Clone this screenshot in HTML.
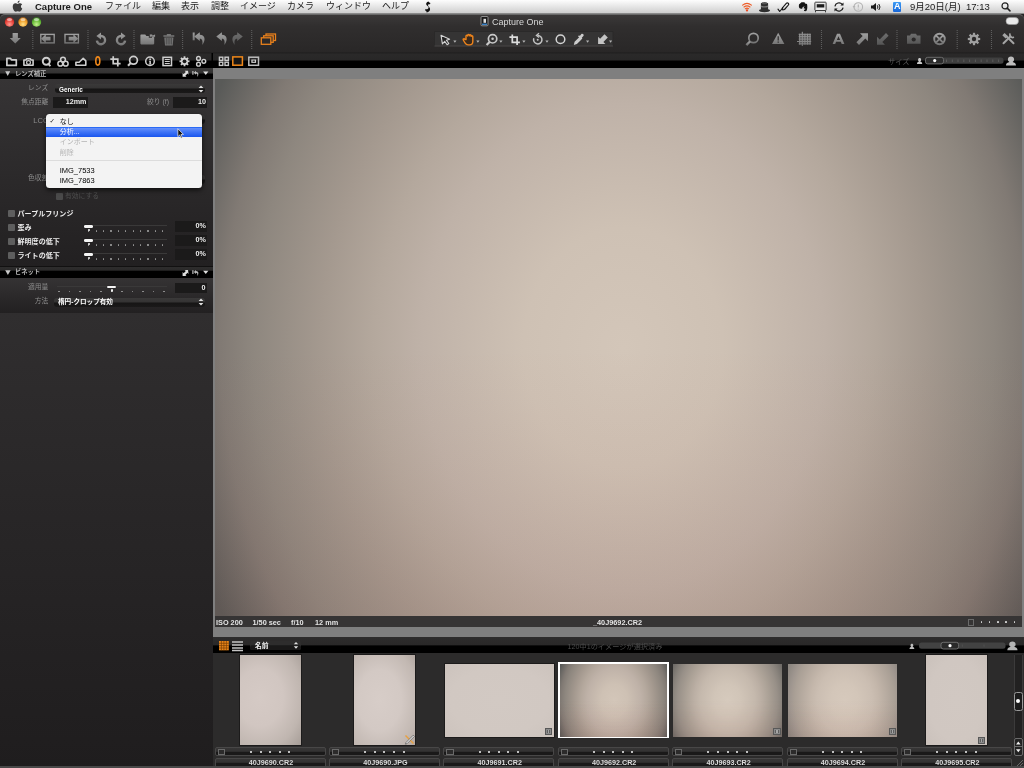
<!DOCTYPE html>
<html lang="ja">
<head>
<meta charset="utf-8">
<title>Capture One</title>
<style>
*{box-sizing:border-box;margin:0;padding:0}
html,body{width:1024px;height:768px;overflow:hidden;background:#252424}
body{position:relative;will-change:transform;font-family:"Liberation Sans","Noto Sans CJK JP",sans-serif;font-size:8px;color:#ddd;line-height:1}
.abs{position:absolute}
.t{position:absolute;white-space:nowrap;line-height:1}
/* menubar */
#menubar{position:absolute;left:0;top:0;width:1024px;height:14px;background:linear-gradient(#fdfdfd,#e6e6e6 50%,#cfcfcf);border-bottom:1px solid #8a8a8a}
#menubar .t{color:#1a1a1a;font-size:9px;top:1.6px}
/* window chrome */
#chrome{position:absolute;left:0;top:14px;width:1024px;height:39px;background:linear-gradient(#3b3939,#302e2e 30%,#2b2929 80%,#292727 97%,#1e1d1d);border-top:1px solid #6a6a6a;border-radius:5px 5px 0 0}
#tabs{position:absolute;left:0;top:53px;width:1024px;height:15px;background:linear-gradient(#232222 0,#2a2929 1.5px,#282727 6.800px,#000 8.300px,#000 15px)}
/* left panel */
#left{position:absolute;left:0;top:68px;width:213px;height:700px;background:#242323}
.phead{position:absolute;left:0;width:213px;height:11px;background:linear-gradient(#3a3939 0,#333232 5px,#000 6px,#000 11px)}
.lab{position:absolute;white-space:nowrap;color:#8c8c8c;font-size:6.8px;text-align:right;line-height:1}
.blab{position:absolute;white-space:nowrap;color:#ececec;font-size:7.05px;font-weight:bold;line-height:1}
.field{position:absolute;background:#1b1a1a;height:11px;color:#ececec;font-size:7.2px;font-weight:bold;text-align:right;padding:1.1px 1px 0 0;line-height:1}
.dd{position:absolute;height:9px;border-radius:3px;background:linear-gradient(#3a3939 0,#343333 4px,#161515 5px,#1a1919 9px);color:#fff;font-weight:bold;font-size:7.5px;padding:1px 0 0 4px;line-height:1;white-space:nowrap}
.cb{position:absolute;width:7px;height:7px;background:#5e5e5e;border-radius:1px}
/* viewer */
#viewer{position:absolute;left:213px;top:68px;width:811px;height:569px;background:#7f7f7f}
#photo{position:absolute;left:2px;top:11px;width:807px;height:537px;background:linear-gradient(to bottom,rgba(160,80,64,0) 50%,rgba(160,80,64,.1) 100%),radial-gradient(ellipse 458px 550px at 50.6% 50%,#d3c6b9 0,#cec1b4 21.800%,#bfb2a8 44.100%,#b4a89d 54.600%,#a4998f 66.200%,#8e877f 80.800%,#817a74 88%,#595a58 100%)}
#info{position:absolute;left:2px;top:548px;width:807px;height:11px;background:#363434}
/* browser */
#btool{position:absolute;left:213px;top:637px;width:811px;height:16px;background:linear-gradient(#2d2c2c 0,#292828 8px,#000 8.8px,#000 16px)}
#strip{position:absolute;left:213px;top:653px;width:811px;height:115px;background:#2c2b2b}
.cell{position:absolute;top:747.2px;width:111px;height:22px}
.rate{position:absolute;left:0;top:0;width:111px;height:9.3px;border:1px solid #484747;border-radius:2px;background:linear-gradient(#373636 0,#333232 3.4px,#1a1919 3.9px,#1a1919 100%)}
.name{position:absolute;left:0;top:10.4px;width:111px;height:11px;border:1px solid #484747;border-radius:2px;background:linear-gradient(#373636 0,#333232 3.4px,#1a1919 3.9px,#1a1919 100%);color:#dadada;font-size:7.2px;font-weight:bold;text-align:center;line-height:8.2px;padding-left:2px}

.hd{color:#b6b6b6;font-size:6.3px;font-weight:bold}
.trk{position:absolute;height:1px;background:#3a3939}
.sl i{position:absolute;width:1.3px;height:1.3px;background:#9a9a9a;border-radius:50%}
.sl b{position:absolute;height:2.6px;background:#f4f4f4;border-radius:1.3px;box-shadow:0 0 1px #000}
.sl u{position:absolute;width:2px;height:2.600px;background:#f0f0f0;border-radius:1px}
#popup{position:absolute;left:46px;top:113.500px;width:156px;height:74.500px;background:#f3f3f3;border-radius:3.500px;box-shadow:0 2px 5px rgba(0,0,0,.7);overflow:hidden;color:#1a1a1a;font-size:7px}
#popup .t{font-size:7px}

.it{top:2.900px;font-size:7.300px;font-weight:bold;color:#e4e4e4}
#info i{position:absolute;top:5.200px;width:1.700px;height:1.700px;border-radius:50%;background:#d8d8d8}
.rate i{position:absolute;top:2.7px;width:2px;height:2px;border-radius:50%;background:#f4f4f4}
.rate b{position:absolute;left:2px;top:.5px;width:7.3px;height:6.8px;border:1px solid #6a6a6a;background:#2c2b2b}
.bdg{position:absolute;width:7.800px;height:7.200px;background:#8a8a8a;border:1px solid #585858}
.bdg i{position:absolute;left:1.100px;top:.9px;width:3.600px;height:3.400px;border-left:1px solid #5e5e5e;border-right:1px solid #5e5e5e;background:#a6a6a6}
</style>
</head>
<body>
<div id="menubar">
<svg class="abs" style="left:10.500px;top:.3px" width="13" height="13" viewBox="0 0 12 12"><path d="M8.3 3.1c-.9 0-1.5.5-2.1.5-.6 0-1.300-.5-2.100-.5C2.800 3.100 1.600 4.200 1.600 6.200c0 2.100 1.500 4.600 2.700 4.600.6 0 1-.4 1.800-.4s1.100.4 1.800.4c1.100 0 2.200-1.900 2.500-2.900-1.600-.7-1.700-3.100-.1-3.800-.5-.7-1.200-1-2-1zM7.900.4C7 .5 6 1.400 6 2.600c1 .1 2-.9 1.900-2.200z" fill="#3c3c3c"/></svg>
<span class="t" style="left:35px;font-weight:bold;font-size:9.5px">Capture One</span>
<span class="t" style="left:105px">ファイル</span>
<span class="t" style="left:152px">編集</span>
<span class="t" style="left:181px">表示</span>
<span class="t" style="left:211px">調整</span>
<span class="t" style="left:240px">イメージ</span>
<span class="t" style="left:287px">カメラ</span>
<span class="t" style="left:326px">ウィンドウ</span>
<span class="t" style="left:382px">ヘルプ</span>
<svg class="abs" style="left:423px;top:1px" width="9" height="12" viewBox="0 0 9 12"><path d="M5.500.5C3.500 1 2.500 2.500 3.500 4 4.500 5.300 6 5.500 5.500 7 5 8.200 3.500 8.500 2.500 8l-.5 1.200C3 10 4 10.500 3.500 11.500 6 11 7.500 9.500 7 7.500 6.600 6 5 5.500 5 4.300 5 3.300 6 3 7 3.300L7.400 2C6.500 1.700 6 1.300 5.500.5z" fill="#111"/></svg>
<!-- status icons -->
<svg class="abs" style="left:741px;top:1px" width="12" height="12" viewBox="0 0 12 12"><g fill="none" stroke="#ef5d28" stroke-width="1.150" stroke-linecap="round"><path d="M1.600 4.100Q6 .6 10.400 4.100"/><path d="M3 6Q6 3.600 9 6"/><path d="M4.400 7.700Q6 6.500 7.600 7.700"/></g><circle cx="6" cy="9.400" r="1.150" fill="#ea4a22"/></svg>
<svg class="abs" style="left:758px;top:1px" width="13" height="12" viewBox="0 0 13 12"><path d="M2.900 2.200Q6.500 .2 10.100 2.200V8.200Q12.300 8.600 12 9.600 11.300 11.200 6.500 11.200 1.700 11.200 1 9.600.7 8.600 2.900 8.200z" fill="#2e2e2e"/><path d="M2.900 4.600Q6.500 5.800 10.100 4.600V6Q6.500 7.200 2.900 6z" fill="#777"/><ellipse cx="6.500" cy="2.300" rx="3" ry=".9" fill="#555"/></svg>
<svg class="abs" style="left:777px;top:1px" width="13" height="12" viewBox="0 0 13 12"><g fill="none" stroke="#161616" stroke-width="1.150" stroke-linecap="round" stroke-linejoin="round"><path d="M1 8.200l1.700 2.300L5.800 6.800"/><path d="M5.300 7L9.300 2.300c1.200-1.200 3.200.4 2.100 1.700L7.500 8.500 5.800 9z"/></g></svg>
<svg class="abs" style="left:797px;top:1px" width="12" height="12" viewBox="0 0 12 12"><path d="M2 3.500L4.500 1.200h3L8 2.500l2 .5c.5 2 .5 4.500-.3 6.500-.5 1-2.200 1-2.700.3V8.500c.5.300 1.300.3 1.300-.4 0-.6-.8-.7-1.500-.6-.3-1 .2-1.700 1.200-1.900-1.500-.3-2.600.5-2.800 2.200-1 .1-2.600-.2-3-1C1.800 5.800 1.700 4.500 2 3.500z" fill="#141414"/></svg>
<svg class="abs" style="left:814px;top:1px" width="13" height="12" viewBox="0 0 13 12"><rect x=".9" y="1.200" width="11.200" height="8.300" rx=".6" fill="#ececec" stroke="#3a3a3a" stroke-width="1"/><rect x="2.700" y="3.200" width="7.600" height="3.300" fill="#1c1c1c"/><path d="M1.500 9.500v1.800M11.500 9.500v1.800" stroke="#3a3a3a" stroke-width="1"/></svg>
<svg class="abs" style="left:833px;top:1px" width="12" height="12" viewBox="0 0 12 12"><g fill="none" stroke="#1b1b1b" stroke-width="1.250"><path d="M1.900 5.300A4.200 4.200 0 0 1 9.200 3.300"/><path d="M10.100 6.700A4.200 4.200 0 0 1 2.800 8.700"/></g><path d="M10.500 1.500v3.100H7.400z" fill="#1b1b1b"/><path d="M1.500 10.500V7.400h3.100z" fill="#1b1b1b"/></svg>
<svg class="abs" style="left:852px;top:1px" width="12" height="12" viewBox="0 0 12 12"><circle cx="6.300" cy="6" r="4.300" fill="none" stroke="#b4b4b4" stroke-width="1.100"/><path d="M6.300 3.500v3M6.300 7.800v.8" stroke="#b4b4b4" stroke-width="1.100"/><path d="M.5 5l1.500 2 1.500-2z" fill="#b4b4b4"/></svg>
<svg class="abs" style="left:870px;top:1px" width="12" height="12" viewBox="0 0 12 12"><path d="M1 4.500h2L6 2v8L3 7.500H1z" fill="#1b1b1b"/><path d="M7.300 4.300q1.300 1.700 0 3.400M8.800 3q2.400 3 0 6" fill="none" stroke="#1b1b1b" stroke-width="1"/></svg>
<div class="abs" style="left:893px;top:2px;width:8px;height:10px;background:linear-gradient(#3d9cf5,#1766d8);border-radius:1px"></div>
<span class="t" style="left:894px;top:2.300px;font-weight:bold;font-size:9px;color:#fff">A</span>
<span class="t" style="left:910px;font-size:9.500px">9月20日(月)</span>
<span class="t" style="left:966px;font-size:9.500px">17:13</span>
<svg class="abs" style="left:1000px;top:1px" width="12" height="12" viewBox="0 0 12 12"><circle cx="5" cy="4.900" r="3" fill="none" stroke="#222" stroke-width="1.200"/><path d="M7.200 7.100L10 9.900" stroke="#222" stroke-width="1.500" stroke-linecap="round"/></svg>
</div>
<div id="chrome"></div>
<div id="tabs"></div>
<svg class="abs" style="left:0;top:14px" width="1024" height="54" viewBox="0 14 1024 54">
<defs>
<radialGradient id="gr" cx=".5" cy=".75" r=".7"><stop offset="0" stop-color="#ff9d94"/><stop offset=".6" stop-color="#e8453c"/><stop offset="1" stop-color="#a8231c"/></radialGradient>
<radialGradient id="gy" cx=".5" cy=".75" r=".7"><stop offset="0" stop-color="#ffe28a"/><stop offset=".6" stop-color="#f0a02c"/><stop offset="1" stop-color="#b56a12"/></radialGradient>
<radialGradient id="gg" cx=".5" cy=".75" r=".7"><stop offset="0" stop-color="#c5f08e"/><stop offset=".6" stop-color="#6cbf3c"/><stop offset="1" stop-color="#3b8220"/></radialGradient>
<linearGradient id="ig" x1="0" y1="0" x2="0" y2="1"><stop offset="0" stop-color="#a0a0a0"/><stop offset="1" stop-color="#767676"/></linearGradient>
<linearGradient id="idim" x1="0" y1="0" x2="0" y2="1"><stop offset="0" stop-color="#6e6e6e"/><stop offset="1" stop-color="#565656"/></linearGradient>
</defs>
<circle cx="9.500" cy="22" r="4.700" fill="url(#gr)"/><ellipse cx="9.500" cy="19.600" rx="2.600" ry="1.500" fill="#fff" opacity=".55"/>
<circle cx="23" cy="22" r="4.700" fill="url(#gy)"/><ellipse cx="23" cy="19.600" rx="2.600" ry="1.500" fill="#fff" opacity=".55"/>
<circle cx="36.500" cy="22" r="4.700" fill="url(#gg)"/><ellipse cx="36.500" cy="19.600" rx="2.600" ry="1.500" fill="#fff" opacity=".55"/>
<rect x="1006" y="17.500" width="12.500" height="7" rx="3.500" fill="#e9e9e9" stroke="#9a9a9a" stroke-width=".6"/>
<!-- separators -->
<g stroke="#5e5e5e" stroke-width="1.100" stroke-dasharray="1 1" fill="none">
<path d="M32.800 30v19M88 30v19M134 30v19M182.600 30v19M251.700 30v19M821.500 30v19M897 30v19M957.200 30v19M991.500 30v19"/>
</g>
<!-- left toolbar icons -->
<g fill="url(#ig)">
<path d="M12.600 33h5.300v5h2.900L15.250 43.600 9.700 38h2.900z"/>
<path d="M101 32.600v2.200a5.300 5.300 0 1 1-5.300 6l2.400-.4a2.900 2.900 0 1 0 2.900-3.200v2.400l-4.600-3.600z"/>
<path d="M121 32.600v2.200a5.300 5.300 0 1 0 5.300 6l-2.400-.4a2.900 2.900 0 1 1-2.900-3.200v2.400l4.600-3.600z"/>
<path d="M140.400 35.300c0-.5.300-.7.700-.7h4.200l1 1.400h2.500v1.800h3.200v-1h2.200V43.600c0 .5-.3.800-.8.800h-12.200c-.5 0-.8-.3-.8-.8z"/><path d="M149.800 34.600h2.300l.5.900 2.500-.9v2.200l-2.200.6-.6-.9-2.500.6z"/>
<g fill="#777"><path d="M163.400 35.300h10.900v1.500h-10.900zM166.800 34h4.100v1.400h-4.100zM164.300 37.400h9.100l-.7 8.100h-7.700z"/></g><path d="M166.300 38v6.500M168.100 38v6.500M169.900 38v6.500M171.600 38v6.500" stroke="#3d3c3c" stroke-width=".7"/>
<path d="M192.700 32.500h2v7.800h-2z"/><path d="M194.2 36.600L199.8 32.200V34.700C204.4 34.700 206.6 39.300 202.2 45.100C202.9 41.500 202.4 38.800 199.8 38.800V41.100Z"/>
<path d="M216.3 36.600L221.9 32.200V34.700C226.5 34.700 228.7 39.300 224.3 45.100C225.0 41.500 224.5 38.800 221.9 38.800V41.100Z"/>
</g>
<g fill="none" stroke="url(#ig)" stroke-width="1.400">
<rect x="40.800" y="34.400" width="13.400" height="8.500"/>
<rect x="65" y="34.400" width="13.400" height="8.500"/>
</g>
<g fill="url(#ig)"><path d="M41 38.650l4.800-4.300v2.500h4.700v3.600h-4.700v2.500z"/><path d="M78.200 38.650l-4.800-4.300v2.500h-4.700v3.600h4.700v2.500z"/></g>
<path d="M242.8 36.600L237.2 32.200V34.700C232.6 34.700 230.4 39.300 234.8 45.100C234.1 41.500 234.6 38.800 237.2 38.800V41.100Z" fill="url(#idim)"/>
<g fill="#2b2929" stroke="#e8801c" stroke-width="1.300"><rect x="266" y="34" width="9.500" height="6.500"/><rect x="263.700" y="35.800" width="9.500" height="6.500"/><rect x="261.300" y="37.800" width="9.500" height="6.500"/></g>
<!-- window title -->
<rect x="481" y="16.500" width="7" height="9.300" rx="1" fill="#1a1a1a" stroke="#9a9a9a" stroke-width=".9"/><rect x="483.500" y="18.800" width="2.500" height="4" fill="#ddd"/><rect x="482" y="23.600" width="5" height="1.300" fill="#3d8edc"/>
<text x="492" y="25" font-family="Liberation Sans, sans-serif" font-size="9" fill="#d6d6d6">Capture One</text>
<!-- center cluster -->
<rect x="434.500" y="31.500" width="178.500" height="14.300" fill="#353434"/><path d="M434.500 45.800v-14.300h178.500v14.300" fill="none" stroke="#2a2929" stroke-width="1"/><path d="M434.500 46h178.500" stroke="#4a4949" stroke-width="1"/>
<g fill="#b4b4b4"><path d="M453.300 40.600h3.200l-1.600 2.200zM476.300 40.600h3.200l-1.600 2.200zM499.300 40.600h3.200l-1.600 2.200zM522.300 40.600h3.200l-1.600 2.200zM545.400 40.600h3.200l-1.600 2.200zM586 40.600h3.200l-1.600 2.200zM609 40.600h3.200l-1.600 2.200z"/></g>
<path d="M441 35.200l8.600 4-3.300 1 2.500 3.300-1.700 1.200-2.400-3.400-2.300 2.500z" fill="#232222" stroke="#d4d4d4" stroke-width="1.100" stroke-linejoin="round"/>
<path d="M466 39.500v-3.400c0-1.200 1.700-1.200 1.700 0v-.8c0-1.200 1.700-1.200 1.700 0v.4c0-1.200 1.700-1.200 1.700 0v.7c0-1.100 1.700-1.100 1.700.1v5c0 2.200-1.100 3.400-3.100 3.400h-1.700c-1.500 0-2.200-.8-3-2.100l-1.700-2.800c-.6-1 .8-1.700 1.500-.8z" fill="#3a2a1c" stroke="#ee841c" stroke-width="1.400" stroke-linejoin="round"/>
<g fill="none" stroke="#c9c9c9"><circle cx="492.600" cy="38.800" r="4.200" stroke-width="1.700"/><path d="M489.600 42l-3 3" stroke-width="2.200"/><circle cx="492.600" cy="38.800" r="1.300" fill="#c9c9c9" stroke="none"/></g>
<path d="M512.300 34.400v7.900h7.600M509.400 37.200h7.700v7.800" fill="none" stroke="#dcdcdc" stroke-width="1.700"/>
<g fill="none" stroke="#c4c4c4" stroke-width="1.500"><path d="M533.800 38.300a4.200 4.200 0 1 0 3.800-2.800"/><path d="M539 33.200l-2.600 2.300 2.700 2" stroke-width="1.300"/><circle cx="537.700" cy="39.800" r="1" fill="#c4c4c4" stroke="none"/></g>
<circle cx="560.500" cy="39.300" r="4.300" fill="none" stroke="#d4d4d4" stroke-width="1.500"/>
<path d="M573.800 45l.8-3.200 4.600-4.600 2.300 2.300-4.600 4.600zM579.800 35.900l1.600-1.800c1.100-1.100 3.100.7 2 1.900l-1.600 1.800.6.700-1.100 1.100-3.300-3.300 1.100-1.100z" fill="#cccccc"/>
<path d="M604.500 34.300l-4.400 4.400-2-2v7.300h7.300l-2-2 4.400-4.400z" fill="#c4c4c4"/>
<!-- right toolbar -->
<g fill="none" stroke="url(#ig)"><circle cx="753.500" cy="38" r="4.700" stroke-width="1.700"/><path d="M750 41.500l-3.600 3.600" stroke-width="2.300"/></g>
<path d="M778.200 32.800l6.200 11.200H772z" fill="url(#ig)"/><path d="M778.200 36.200v4.300M778.200 41.600v1.200" stroke="#2b2929" stroke-width="1.200"/>
<g stroke="url(#ig)" stroke-width="1" fill="none"><path d="M802.300 31.800v14.200M799.700 33.800v10.800M804.900 33.800v10.800M807.500 33.800v10.800M810.100 33.800v10.800M797 41.500h14.200M798.700 34.300h12M798.700 36.700h12M798.700 39.100h12M798.700 43.900h12"/></g>
<rect x="799.200" y="33.800" width="11.400" height="10.600" fill="#8a8a8a" opacity=".4"/>
<path d="M837 33.700h3l4.400 10.400h-2.700l-.9-2.300h-4.700l-.9 2.300h-2.600zM838.500 36.300l-1.600 3.700h3.200z" fill="url(#ig)"/>
<path d="M860 33.300h8v8l-2.700-2.700-6.300 6.300-2.600-2.600 6.300-6.300z" fill="url(#ig)"/>
<path d="M885 44.700h-8v-8l2.700 2.700 6.300-6.300 2.600 2.600-6.300 6.300z" fill="url(#idim)"/>
<path d="M907 35.500h3l1-1.800h5l1 1.800h3.500v8.300H907z" fill="url(#idim)"/><circle cx="913.700" cy="39.500" r="2.100" fill="#2b2929"/>
<g fill="none" stroke="url(#ig)" stroke-width="1.900"><circle cx="939.500" cy="39" r="5.300"/><path d="M935.900 35.400l7.200 7.200M943.100 35.400l-7.200 7.200"/></g>
<g transform="translate(974,39)"><g fill="#a0a0a0"><circle r="4.500"/><g id="teeth"><rect x="-1.100" y="-6.200" width="2.200" height="12.400"/><rect x="-1.100" y="-6.200" width="2.200" height="12.400" transform="rotate(45)"/><rect x="-1.100" y="-6.200" width="2.200" height="12.400" transform="rotate(90)"/><rect x="-1.100" y="-6.200" width="2.200" height="12.400" transform="rotate(135)"/></g></g><circle r="2.200" fill="#2b2929"/></g>
<g stroke="#a4a4a4" fill="none" stroke-linecap="round"><path d="M1003.500 43.300l7-7" stroke-width="2"/><path d="M1013.500 43.300l-7.300-7.300" stroke-width="2"/></g><path d="M1002.300 35.300l2.300-2.300 3.300 3.300-2.300 2.300z" fill="#a4a4a4"/><path d="M1010.200 33.400a2.700 2.700 0 0 0 3.700 3.700" fill="none" stroke="#a4a4a4" stroke-width="1.700"/>
<!-- tool tabs -->
<rect x="211.500" y="53" width="1.500" height="15" fill="#000"/>
<g fill="none" stroke="#cecece" stroke-width="1.700" stroke-linejoin="round">
<path d="M6.900 58.300h3.500l1 1.500h4.900v5.600H6.900z"/>
<path d="M23.900 60h2.100l.8-1.300h3.400l.8 1.300h2.100v5.200h-9.200z" stroke-width="1.600"/><circle cx="28.500" cy="62.500" r="1.900" stroke-width="1.200"/>
<circle cx="46.300" cy="61.200" r="3.500" stroke-width="2"/><path d="M47.800 63.300l2.600 2.800" stroke-width="1.900"/>
<circle cx="63" cy="59.600" r="2.400" stroke-width="1.500"/><circle cx="60.300" cy="63.700" r="2.400" stroke-width="1.500"/><circle cx="65.700" cy="63.700" r="2.400" stroke-width="1.500"/>
<path d="M75.900 65.200v-2.900h3.300l4-4 2.600 2.600v4.300z" stroke-width="1.600"/>
<path d="M113.200 56.300v7.400h7.400M110.300 59.100h7.500v7.400" stroke-width="1.700" stroke-linejoin="miter"/>
<circle cx="133.500" cy="60.300" r="3.900" stroke-width="1.700"/><path d="M130.700 63.100l-2.700 2.700" stroke-width="2.100"/>
<circle cx="150" cy="61.300" r="4.300" stroke-width="1.500"/>
<rect x="163" y="57.300" width="8.500" height="8.300" stroke-width="1.500" stroke-linejoin="miter"/><path d="M164.800 59.500h5M164.800 61.500h5M164.800 63.500h5" stroke-width="1.100"/>
<circle cx="198.500" cy="58.400" r="1.900" stroke-width="1.400"/><circle cx="198.500" cy="64.200" r="1.900" stroke-width="1.400"/><circle cx="203.800" cy="61.300" r="1.900" stroke-width="1.400"/>
<g stroke-width="1.400" stroke-linejoin="miter" stroke="#c8c8c8"><rect x="219.400" y="57.200" width="3.400" height="3.200"/><rect x="225" y="57.200" width="3.400" height="3.200"/><rect x="219.400" y="62.200" width="3.400" height="3.200"/><rect x="225" y="62.200" width="3.400" height="3.200"/></g>
<rect x="248.800" y="57.200" width="9.700" height="8.100" stroke="#bdbdbd" stroke-width="1.500" stroke-linejoin="miter"/>
</g>
<path d="M149.300 58.600h1.600v1.400h-1.600zM148.900 60.700h2v3h.6v.8h-2.900v-.8h.8v-2.200h-.5z" fill="#d2d2d2"/>
<rect x="251.300" y="59.500" width="4.800" height="3.400" fill="#cfcfcf"/><rect x="252.600" y="60.500" width="2.200" height="1.400" fill="#222"/>
<ellipse cx="97.800" cy="61" rx="2" ry="4.100" fill="none" stroke="#f0881a" stroke-width="1.600"/>
<rect x="232.800" y="56.900" width="9.600" height="8.300" fill="#161616" stroke="#f0881a" stroke-width="1.500"/>
<g transform="translate(184.500,61.300)"><g fill="#d2d2d2"><circle r="3.600"/><rect x="-.9" y="-5" width="1.800" height="10"/><rect x="-.9" y="-5" width="1.800" height="10" transform="rotate(45)"/><rect x="-.9" y="-5" width="1.800" height="10" transform="rotate(90)"/><rect x="-.9" y="-5" width="1.800" height="10" transform="rotate(135)"/></g><circle r="1.900" fill="#1a1a1a"/></g>
<!-- size slider -->
<text x="888" y="63.600" font-family="Liberation Sans, Noto Sans CJK JP, sans-serif" font-size="7.300" fill="#5a5a5a">サイズ</text>
<path d="M917 64c0-1.800 1-2 2-2.400-.8-.6-.9-1.100-.9-1.800 0-1 .6-1.700 1.500-1.700s1.500.7 1.500 1.700c0 .7-.1 1.200-.9 1.800 1 .4 2 .6 2 2.400z" fill="#c8c8c8"/>
<path d="M1006 65.600c0-2.700 1.700-3 3.400-3.600-1.300-.8-1.500-1.600-1.500-2.700 0-1.700 1.200-2.800 3.100-2.800s3.100 1.100 3.100 2.800c0 1.100-.2 1.900-1.500 2.700 1.700.6 3.400.9 3.400 3.600z" fill="#bdbdbd"/>
<rect x="925" y="57.500" width="78.500" height="6.200" rx="2.500" fill="#3f3f3f"/>
<g stroke="#5a5a5a" stroke-width="1"><path d="M946.500 59.500v2.500M952.300 59.500v2.500M958 59.500v2.500M963.800 59.500v2.500M969.600 59.500v2.500M975.400 59.500v2.500M981.200 59.500v2.500M987 59.500v2.500M992.800 59.500v2.500M998.600 59.500v2.500"/></g>
<rect x="925.500" y="57.300" width="18" height="6.600" rx="2.200" fill="#2c2c2c" stroke="#707070" stroke-width=".9"/><circle cx="934.700" cy="60.600" r="1.600" fill="#fff"/>
</svg>
<div id="left"></div>
<div id="lp">
<div class="phead" style="top:68px"></div>
<div class="abs" style="left:0;top:79px;width:213px;height:187px;background:linear-gradient(#363435,#222021)"></div>
<div class="abs" style="left:0;top:265.700px;width:213px;height:.8px;background:#121111"></div>
<div class="abs" style="left:0;top:266.500px;width:213px;height:11px;background:linear-gradient(#2e2d2d 0,#2a2929 3.300px,#000 4px,#000 11px)"></div>
<div class="abs" style="left:0;top:277.500px;width:213px;height:35px;background:linear-gradient(#353334,#222021)"></div>
<div class="abs" style="left:0;top:312.500px;width:213px;height:455.500px;background:linear-gradient(#302e2f,#282627 45%,#1f1d1e)"></div>
<svg class="abs" style="left:0;top:68px" width="213" height="11" viewBox="0 0 213 11"><path d="M5.200 3.300h5l-2.500 4.800z" fill="#c8c8c8"/><g fill="#dedede"><path d="M188 2.800h-3.300l1.100 1.100-2.100 2.100-1.100-1.100v3.900h3.900l-1.100-1.100 2.100-2.100 1.100 1.100z" transform="translate(0 0)"/><path d="M192.300 3h1.200v3.800h-1.200zM196 2.700l-2.200 2 2.200 2V5.500c1.300 0 1.800.9 1.100 3.300 1.900-1.700 1.800-4.900-1.100-4.900z" transform="translate(0 0)" fill="#bdbdbd"/><path d="M203.100 3.600h5.300l-2.650 3.300z" transform="translate(0 0)"/></g></svg>
<svg class="abs" style="left:0;top:266.500px" width="213" height="11" viewBox="0 0 213 11"><path d="M5.200 3.300h5.400l-2.700 4.600z" fill="#c8c8c8"/><g fill="#dedede"><path d="M188 2.800h-3.300l1.100 1.100-2.100 2.100-1.100-1.100v3.900h3.900l-1.100-1.100 2.100-2.100 1.100 1.100z" transform="translate(0 .2)"/><path d="M192.300 3h1.200v3.800h-1.200zM196 2.700l-2.200 2 2.200 2V5.500c1.300 0 1.800.9 1.100 3.300 1.900-1.700 1.800-4.900-1.100-4.900z" transform="translate(0 .2)" fill="#bdbdbd"/><path d="M203.100 3.600h5.300l-2.650 3.300z" transform="translate(0 .2)"/></g></svg>
<span class="t hd" style="left:15px;top:70.600px">レンズ補正</span>
<span class="t hd" style="left:15px;top:269.200px">ビネット</span>
<span class="lab" style="right:975.7px;top:85px">レンズ</span>
<div class="dd" style="left:55px;top:84px;width:150px"><span style="display:inline-block;transform:scaleX(.84);transform-origin:0 50%;font-size:7.600px;position:relative;top:.6px">Generic</span></div>
<svg class="abs" style="left:198px;top:85px" width="6" height="8" viewBox="0 0 6 8"><path d="M.6 3L3 .5 5.400 3zM.6 5L3 7.500 5.400 5z" fill="#e0e0e0"/></svg>
<span class="lab" style="right:975.7px;top:99px">焦点距離</span>
<div class="field" style="left:53px;top:97px;width:34.500px">12mm</div>
<span class="lab" style="left:147px;top:99px">絞り (f)</span>
<div class="field" style="left:173px;top:97px;width:34px">10</div>
<span class="lab" style="right:975.7px;top:117px;font-size:7.500px">LCC</span>
<div class="dd" style="left:55px;top:115px;width:150px;color:transparent">&nbsp;</div>
<span class="lab" style="right:975.7px;top:175px">色収差</span>
<div class="dd" style="left:55px;top:175px;width:150px">&nbsp;</div>
<div class="cb" style="left:55.500px;top:192.500px;background:#4a4a4a"></div>
<span class="lab" style="left:65px;top:193px;color:#4f4f4f">有効にする</span>
<div class="cb" style="left:7.700px;top:209.700px"></div><span class="blab" style="left:17.500px;top:209.500px">パープルフリンジ</span>
<div class="cb" style="left:7.700px;top:223.700px"></div><span class="blab" style="left:17.500px;top:223.500px">歪み</span>
<div class="cb" style="left:7.700px;top:237.800px"></div><span class="blab" style="left:17.500px;top:237.500px">鮮明度の低下</span>
<div class="cb" style="left:7.700px;top:251.900px"></div><span class="blab" style="left:17.500px;top:251.500px">ライトの低下</span>
<div class="field" style="left:175px;top:221px;width:32px">0%</div>
<div class="field" style="left:175px;top:235px;width:32px">0%</div>
<div class="field" style="left:175px;top:249px;width:32px">0%</div>
<div class="trk" style="left:84px;top:224.500px;width:83px"></div>
<div class="trk" style="left:84px;top:238.500px;width:83px"></div>
<div class="trk" style="left:84px;top:252.500px;width:83px"></div>
<div class="sl"><i style="left:88.15px;top:230.3px"></i><i style="left:95.55px;top:230.3px"></i><i style="left:102.95px;top:230.3px"></i><i style="left:110.35px;top:230.3px"></i><i style="left:117.75px;top:230.3px"></i><i style="left:125.15px;top:230.3px"></i><i style="left:132.55px;top:230.3px"></i><i style="left:139.95px;top:230.3px"></i><i style="left:147.35px;top:230.3px"></i><i style="left:154.75px;top:230.3px"></i><i style="left:162.15px;top:230.3px"></i><b style="left:83.85px;top:225.0px;width:9.5px"></b><u style="left:87.70px;top:228.6px"></u></div><div class="sl"><i style="left:88.15px;top:244.3px"></i><i style="left:95.55px;top:244.3px"></i><i style="left:102.95px;top:244.3px"></i><i style="left:110.35px;top:244.3px"></i><i style="left:117.75px;top:244.3px"></i><i style="left:125.15px;top:244.3px"></i><i style="left:132.55px;top:244.3px"></i><i style="left:139.95px;top:244.3px"></i><i style="left:147.35px;top:244.3px"></i><i style="left:154.75px;top:244.3px"></i><i style="left:162.15px;top:244.3px"></i><b style="left:83.85px;top:239.0px;width:9.5px"></b><u style="left:87.70px;top:242.6px"></u></div><div class="sl"><i style="left:88.15px;top:258.3px"></i><i style="left:95.55px;top:258.3px"></i><i style="left:102.95px;top:258.3px"></i><i style="left:110.35px;top:258.3px"></i><i style="left:117.75px;top:258.3px"></i><i style="left:125.15px;top:258.3px"></i><i style="left:132.55px;top:258.3px"></i><i style="left:139.95px;top:258.3px"></i><i style="left:147.35px;top:258.3px"></i><i style="left:154.75px;top:258.3px"></i><i style="left:162.15px;top:258.3px"></i><b style="left:83.85px;top:253.0px;width:9.5px"></b><u style="left:87.70px;top:256.6px"></u></div>
<span class="lab" style="right:975.7px;top:284px">適用量</span>
<div class="trk" style="left:57px;top:285.500px;width:110px"></div>
<div class="sl"><i style="left:58.40px;top:291.0px"></i><i style="left:68.90px;top:291.0px"></i><i style="left:79.40px;top:291.0px"></i><i style="left:89.90px;top:291.0px"></i><i style="left:100.40px;top:291.0px"></i><i style="left:110.90px;top:291.0px"></i><i style="left:121.40px;top:291.0px"></i><i style="left:131.90px;top:291.0px"></i><i style="left:142.40px;top:291.0px"></i><i style="left:152.90px;top:291.0px"></i><i style="left:163.40px;top:291.0px"></i><b style="left:106.95px;top:285.7px;width:9.5px"></b><u style="left:110.80px;top:289.3px"></u></div>
<div class="field" style="left:175px;top:283px;width:31.500px;height:10px">0</div>
<span class="lab" style="right:975.7px;top:298px">方法</span>
<div class="dd" style="left:54px;top:297.500px;width:151px;font-size:6.600px;padding-top:1.300px">楕円-クロップ有効</div>
<svg class="abs" style="left:197.500px;top:298px" width="6" height="8" viewBox="0 0 6 8"><path d="M.6 3L3 .5 5.400 3zM.6 5L3 7.500 5.400 5z" fill="#e0e0e0"/></svg>
<!-- popup menu -->
<div id="popup">
<div class="abs" style="left:0;top:13.400px;width:156px;height:9.800px;background:linear-gradient(#2a6af5 0,#2a6af5 .8px,#6690fa 1px,#3f74f6 50%,#1955ee 100%)"></div>
<span class="t" style="left:3.600px;top:4px;font-size:6.500px;font-weight:bold;color:#111;font-family:'DejaVu Sans',sans-serif">✓</span>
<span class="t" style="left:13.700px;top:4px">なし</span>
<span class="t" style="left:13.700px;top:14.600px;color:#fff">分析...</span>
<span class="t" style="left:13.700px;top:24.600px;color:#b4b4b4">インポート</span>
<span class="t" style="left:13.700px;top:35.200px;color:#b4b4b4">削除</span>
<div class="abs" style="left:0;top:46.500px;width:156px;height:1px;background:#dcdcdc"></div>
<span class="t" style="left:13.700px;top:53.200px;font-size:7.500px;color:#000">IMG_7533</span>
<span class="t" style="left:13.700px;top:63.700px;font-size:7.500px;color:#000">IMG_7863</span>
</div>
<svg class="abs" style="left:176.500px;top:128.300px" width="7.600" height="11" viewBox="0 0 9 13"><path d="M1 .8v9.500l2.200-2.100 1.600 3.800 1.500-.7-1.600-3.700h3z" fill="#111" stroke="#fff" stroke-width=".8"/></svg>
</div>
<div id="viewer"><div id="photo"></div><div id="info">
<span class="t it" style="left:1px">ISO 200</span><span class="t it" style="left:37.500px">1/50 sec</span><span class="t it" style="left:76px">f/10</span><span class="t it" style="left:100px">12 mm</span>
<span class="t it" style="left:378px">_40J9692.CR2</span>
<div class="abs" style="left:752.500px;top:2.500px;width:6.500px;height:7px;border:1px solid #6a6a6a"></div>
<i style="left:765.500px"></i><i style="left:773.700px"></i><i style="left:782px"></i><i style="left:790.200px"></i><i style="left:798.500px"></i>
</div></div>
<div id="btool">
<svg class="abs" style="left:0;top:0" width="811" height="17" viewBox="213 637 811 17">
<rect x="219" y="641" width="9.800" height="9.300" fill="#e8851a"/>
<g stroke="#7a3f05" stroke-width=".7"><path d="M219 643.300h9.800M219 645.600h9.800M219 648h9.800M221.400 641v9.300M223.900 641v9.300M226.400 641v9.300"/></g>
<g stroke="#c4c4c4" stroke-width="1.500"><path d="M232 642h11M232 645h11M232 648h11M232 650.500h11" stroke-width="1.300"/></g>
<rect x="250" y="640.500" width="51" height="9.500" rx="2.500" fill="#2e2d2d"/><rect x="250" y="645.300" width="51" height="4.700" rx="2" fill="#191818"/>
<path d="M293.800 644.300l2.200-2.400 2.200 2.400zM293.800 646.300l2.200 2.400 2.200-2.400z" fill="#e0e0e0"/>
<text x="255" y="648.200" font-family="Liberation Sans, Noto Sans CJK JP, sans-serif" font-weight="bold" font-size="6.800" fill="#f0f0f0">名前</text>
<text x="567.500" y="648.600" font-family="Liberation Sans, Noto Sans CJK JP, sans-serif" font-size="7.200" fill="#4a4a4a">120中1のイメージが選択済み</text>
<path d="M909.500 649c0-1.600.9-1.800 1.800-2.200-.7-.5-.8-1-.8-1.600 0-.9.600-1.500 1.400-1.500s1.400.6 1.400 1.500c0 .6-.1 1.100-.8 1.600.9.400 1.800.6 1.800 2.200z" fill="#bcbcbc"/>
<path d="M1007.300 650.300c0-2.600 1.700-2.900 3.400-3.500-1.300-.8-1.500-1.500-1.500-2.600 0-1.700 1.200-2.700 3.200-2.700s3.200 1 3.200 2.700c0 1.100-.2 1.800-1.500 2.600 1.700.6 3.400.9 3.400 3.500z" fill="#b4b4b4"/>
<rect x="919" y="642.500" width="86.500" height="6.300" rx="2.500" fill="#424242"/>
<path d="M962.300 644.500v2.300M984 644.500v2.300" stroke="#505050" stroke-width="1"/>
<rect x="941" y="642.300" width="17.600" height="6.700" rx="2.300" fill="#2a2a2a" stroke="#747474" stroke-width=".9"/><circle cx="950" cy="645.700" r="1.600" fill="#fff"/>
</svg>
</div>
<div id="strip"></div>
<div class="abs" style="left:557.600px;top:661.800px;width:111.300px;height:76.700px;background:#fff"></div>
<div class="abs" style="left:240px;top:654.8px;width:60.5px;height:90.5px;background:radial-gradient(ellipse 95% 80% at 33% 47%,#d5cac5 0,#d1c6c1 40%,#c0b6b0 72%,#a39a94 100%);box-shadow:0 0 0 .8px rgba(0,0,0,.45)"></div>
<div class="abs" style="left:354.3px;top:654.8px;width:60.5px;height:90.5px;background:radial-gradient(ellipse 85% 80% at 42% 50%,#d7cdc8 0,#d3c9c4 42%,#c2b8b2 75%,#a89e98 100%);box-shadow:0 0 0 .8px rgba(0,0,0,.45)"></div>
<div class="abs" style="left:444.5px;top:663.5px;width:109.3px;height:73.3px;background:radial-gradient(ellipse 75% 75% at 50% 50%,#d2c9c3 0,#d1c8c2 60%,#cbc2bc 100%);box-shadow:0 0 0 .8px rgba(0,0,0,.45)"></div>
<div class="abs" style="left:559.500px;top:663.700px;width:107.500px;height:73px;background:linear-gradient(to bottom,rgba(160,80,64,0) 50%,rgba(160,80,64,.1) 100%),radial-gradient(ellipse 56.750% 102.400% at 50.600% 50%,#d3c6b9 0,#cec1b4 21.800%,#bfb2a8 44.100%,#b4a89d 54.600%,#a4998f 66.200%,#8e877f 80.800%,#817a74 88%,#595a58 100%)"></div>
<div class="abs" style="left:673px;top:663.500px;width:109px;height:73.300px;background:linear-gradient(to bottom,rgba(160,80,64,0) 50%,rgba(160,80,64,.08) 100%),radial-gradient(ellipse 56.750% 102.400% at 50% 50%,#d6cabd 0,#d1c5b8 21.800%,#c5b9ad 44.100%,#bbafa4 54.600%,#aca297 66.200%,#989088 80.800%,#8a847d 88%,#6d6a66 100%)"></div>
<div class="abs" style="left:788px;top:663.500px;width:108.800px;height:73.300px;background:linear-gradient(to bottom,rgba(160,80,64,0) 50%,rgba(160,80,64,.08) 100%),radial-gradient(ellipse 56.750% 102.400% at 52% 50%,#d6c9bc 0,#d3c6b9 21.800%,#cbbeb2 44.100%,#c4b7ab 54.600%,#b9ada2 66.200%,#aaa096 80.800%,#a09790 88%,#8d8781 100%)"></div>
<div class="abs" style="left:926px;top:654.8px;width:61px;height:90.5px;background:radial-gradient(ellipse 75% 75% at 50% 50%,#d1c8c2 0,#d0c7c1 60%,#c9c0ba 100%);box-shadow:0 0 0 .8px rgba(0,0,0,.45)"></div>
<div class="bdg" style="left:544.5px;top:728px"><i></i></div>
<div class="bdg" style="left:773.300px;top:728px"><i></i></div>
<div class="bdg" style="left:888.500px;top:728px"><i></i></div>
<div class="bdg" style="left:977.5px;top:737px"><i></i></div>
<svg class="abs" style="left:404px;top:734px" width="11" height="11" viewBox="0 0 11 11"><path d="M1.500 1.500l8 8" stroke="#e8a040" stroke-width="1.500"/><path d="M9.300 1.200L2 8.500l-.6 1.700 1.700-.6 7.300-7.300z" fill="#e8e8e8" stroke="#444" stroke-width=".6"/></svg>
<div class="cell" style="left:214.5px"><div class="rate"><b></b><i style="left:34.4px"></i><i style="left:44.0px"></i><i style="left:53.6px"></i><i style="left:63.2px"></i><i style="left:72.8px"></i></div><div class="name">40J9690.CR2</div></div>
<div class="cell" style="left:328.9px"><div class="rate"><b></b><i style="left:34.4px"></i><i style="left:44.0px"></i><i style="left:53.6px"></i><i style="left:63.2px"></i><i style="left:72.8px"></i></div><div class="name">40J9690.JPG</div></div>
<div class="cell" style="left:443.3px"><div class="rate"><b></b><i style="left:34.4px"></i><i style="left:44.0px"></i><i style="left:53.6px"></i><i style="left:63.2px"></i><i style="left:72.8px"></i></div><div class="name">40J9691.CR2</div></div>
<div class="cell" style="left:557.7px"><div class="rate"><b></b><i style="left:34.4px"></i><i style="left:44.0px"></i><i style="left:53.6px"></i><i style="left:63.2px"></i><i style="left:72.8px"></i></div><div class="name">40J9692.CR2</div></div>
<div class="cell" style="left:672.1px"><div class="rate"><b></b><i style="left:34.4px"></i><i style="left:44.0px"></i><i style="left:53.6px"></i><i style="left:63.2px"></i><i style="left:72.8px"></i></div><div class="name">40J9693.CR2</div></div>
<div class="cell" style="left:786.5px"><div class="rate"><b></b><i style="left:34.4px"></i><i style="left:44.0px"></i><i style="left:53.6px"></i><i style="left:63.2px"></i><i style="left:72.8px"></i></div><div class="name">40J9694.CR2</div></div>
<div class="cell" style="left:900.9px"><div class="rate"><b></b><i style="left:34.4px"></i><i style="left:44.0px"></i><i style="left:53.6px"></i><i style="left:63.2px"></i><i style="left:72.8px"></i></div><div class="name">40J9695.CR2</div></div>
<div class="abs" style="left:1014px;top:655px;width:8.500px;height:83px;background:#222121;border-left:1px solid #3c3b3b;border-right:1px solid #3c3b3b"></div>
<div class="abs" style="left:1014px;top:691.500px;width:8.500px;height:19px;border-radius:2.500px;background:#1c1c1c;border:1px solid #9a9a9a"></div>
<div class="abs" style="left:1016.300px;top:699px;width:4px;height:4px;border-radius:50%;background:#fff"></div>
<div class="abs" style="left:1014px;top:737.500px;width:8.500px;height:18.500px;border-radius:2px;background:#222;border:1px solid #6c6c6c"></div>
<div class="abs" style="left:1014px;top:746.300px;width:8.500px;height:1px;background:#6c6c6c"></div>
<svg class="abs" style="left:1013px;top:737px" width="11" height="31" viewBox="0 0 11 31"><path d="M3 7.500l2.300-3 2.300 3zM3 12.300l2.300 3 2.300-3z" fill="#f0f0f0"/><path d="M10 23l-6.500 6.500M10 26l-3.500 3.500" stroke="#777" stroke-width=".8"/></svg>
<div class="abs" style="left:0;top:765.500px;width:1024px;height:2.500px;background:#494949"></div>
</body>
</html>
